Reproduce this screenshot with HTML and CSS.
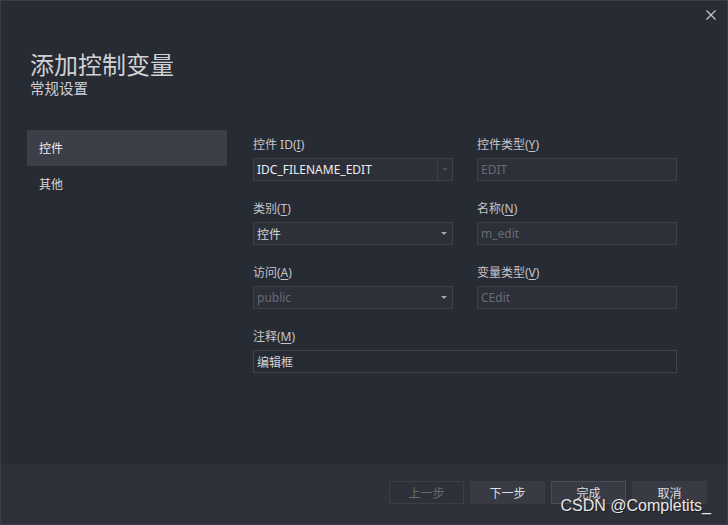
FILE: index.html
```html
<!DOCTYPE html>
<html lang="zh-CN">

<head>
    <meta charset="UTF-8">
    <title>添加控制变量</title>
    <link rel="stylesheet" href="styles.css">
</head>

<body>
    <div class="window">
        <div class="titlebar">
            <span class="close">
                <svg width="10" height="10" viewBox="0 0 10 10">
                    <path d="M0.5 0.5 L9.5 9.5 M9.5 0.5 L0.5 9.5" stroke="#c8c9cc" stroke-width="1.2" fill="none" />
                </svg>
            </span>
        </div>
        <div class="heading">
            <h1>添加控制变量</h1>
            <p class="subtitle">常规设置</p>
        </div>
        <div class="content">
            <ul class="nav">
                <li class="active">控件</li>
                <li>其他</li>
            </ul>
            <div class="form">
                <div class="field">
                    <label>控件 ID(<u>I</u>)</label>
                    <div class="box combo">
                        <span class="value">IDC_FILENAME_EDIT</span>
                        <span class="drop split"><i class="arrow dim"></i></span>
                    </div>
                </div>
                <div class="field">
                    <label>控件类型(<u>Y</u>)</label>
                    <div class="box disabled"><span class="value">EDIT</span></div>
                </div>
                <div class="field">
                    <label>类别(<u>T</u>)</label>
                    <div class="box">
                        <span class="value">控件</span>
                        <span class="drop"><i class="arrow"></i></span>
                    </div>
                </div>
                <div class="field">
                    <label>名称(<u>N</u>)</label>
                    <div class="box disabled"><span class="value">m_edit</span></div>
                </div>
                <div class="field">
                    <label>访问(<u>A</u>)</label>
                    <div class="box disabled">
                        <span class="value">public</span>
                        <span class="drop"><i class="arrow"></i></span>
                    </div>
                </div>
                <div class="field">
                    <label>变量类型(<u>V</u>)</label>
                    <div class="box disabled"><span class="value">CEdit</span></div>
                </div>
                <div class="field wide">
                    <label>注释(<u>M</u>)</label>
                    <div class="box plain"><span class="value">编辑框</span></div>
                </div>
            </div>
        </div>
        <div class="footer">
            <button class="btn" disabled>上一步</button>
            <button class="btn">下一步</button>
            <button class="btn default">完成</button>
            <button class="btn">取消</button>
        </div>
        <div class="watermark">CSDN @Completits_</div>
    </div>
</body>

</html>
```

FILE: styles.css
```css
* {
    margin: 0;
    padding: 0;
    box-sizing: border-box;
}

body {
    background-color: #272b34;
    font-family: "Noto Sans", "Noto Sans CJK SC", sans-serif;
    font-size: 12px;
    color: #d2d3d6;
}

.window {
    position: relative;
    width: 728px;
    height: 525px;
    border: 1px solid #3a3d45;
    display: flex;
    flex-direction: column;
}

.titlebar {
    height: 48px;
    display: flex;
    justify-content: flex-end;
    padding: 9px 11px 0 0;
}

.close {
    width: 10px;
    height: 10px;
    display: block;
}

.close svg {
    display: block;
}

.heading {
    padding-left: 29px;
}

h1 {
    font-family: "Noto Sans CJK SC", sans-serif;
    font-size: 24px;
    font-weight: 400;
    line-height: 30px;
    color: #cfd0d3;
}

.subtitle {
    font-family: "Noto Sans CJK SC", sans-serif;
    font-size: 14.5px;
    line-height: 18px;
    color: #cfd0d3;
}

.content {
    flex: 1;
    display: flex;
    gap: 26px;
    padding: 33px 0 0 26px;
}

.nav {
    list-style: none;
    width: 200px;
}

.nav li {
    height: 36px;
    line-height: 36px;
    padding-left: 12px;
    font-family: "Noto Sans CJK SC", sans-serif;
    color: #d6d7da;
}

.nav li.active {
    background-color: #3c3f48;
    color: #eceef0;
}

.form {
    display: grid;
    grid-template-columns: 200px 200px;
    column-gap: 24px;
    row-gap: 20px;
    padding-top: 7px;
    align-content: start;
}

.field {
    display: flex;
    flex-direction: column;
    gap: 5px;
}

.field.wide {
    grid-column: 1 / 3;
}

label {
    line-height: 16px;
    color: #c4c5c9;
}

label u {
    text-underline-offset: 2px;
}

.box {
    height: 23px;
    display: flex;
    align-items: center;
    background-color: #2d3039;
    border: 1px solid #3d4048;
}

.box .value {
    flex: 1;
    padding-left: 3px;
    white-space: nowrap;
}

.combo .value {
    color: #eceef0;
}

.box.disabled .value {
    color: #686b72;
}

.box.plain {
    background-color: #262a33;
    border-color: #41444c;
}

.drop {
    width: 14px;
    height: 100%;
    display: flex;
    align-items: center;
    justify-content: center;
    margin-right: 1px;
}

.drop.split {
    border-left: 1px solid #3d4048;
}

.arrow {
    width: 0;
    height: 0;
    border-left: 3px solid transparent;
    border-right: 3px solid transparent;
    border-top: 3px solid #a6a8ad;
}

.arrow.dim {
    border-top-color: #494c54;
}

.footer {
    height: 60px;
    background-color: #2e313a;
    display: flex;
    justify-content: flex-end;
    align-items: flex-start;
    gap: 6px;
    padding: 17px 20px 0 0;
}

.btn {
    width: 75px;
    height: 23px;
    font-family: "Noto Sans CJK SC", sans-serif;
    font-size: 12px;
    color: #dcdde0;
    background-color: #383b44;
    border: 1px solid #383b44;
}

.btn:disabled {
    background-color: transparent;
    border-color: #3c3f47;
    color: #686b72;
}

.btn.default {
    border-color: #4a4d55;
}

.watermark {
    position: absolute;
    right: 16px;
    bottom: 9px;
    font-family: "Liberation Sans", sans-serif;
    font-size: 16px;
    color: #e8e8e8;
    text-shadow: 1px 1px 1px #1a1c20;
}
```
